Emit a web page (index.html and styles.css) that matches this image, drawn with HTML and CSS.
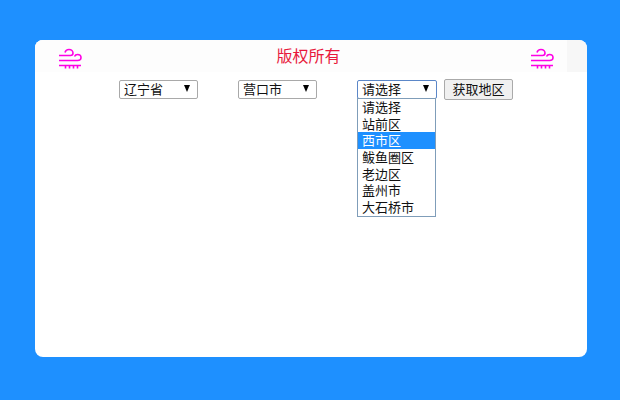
FILE: index.html
```html
<!DOCTYPE html>
<html lang="zh-CN">
<head>
    <meta charset="UTF-8">
    <title>版权所有</title>
    <link rel="stylesheet" href="styles.css">
</head>
<body>
<div class="card">
    <div class="header">
        <div class="header-main">
            <svg class="wind" viewBox="0 0 24 22" width="24" height="22">
                <path d="M1 8.500H12.500C14.500 8.500 15 7.500 15 6C15 4 13.500 2.500 11 2.500C9 2.500 7.500 3.500 7 5.500"/>
                <path d="M1 13.500H19.500C22 13.500 23 12 23 10.500C23 8.500 21.500 7.500 19.500 7.500C18 7.500 17 8.300 16.500 9.500"/>
                <path d="M1 18.500H23"/>
                <path d="M7.500 19V21.500M11.500 19V21.500M15.500 19V21.500M19.500 19V21.500"/>
            </svg>
            <h1 class="title">版权所有</h1>
            <svg class="wind" viewBox="0 0 24 22" width="24" height="22">
                <path d="M1 8.500H12.500C14.500 8.500 15 7.500 15 6C15 4 13.500 2.500 11 2.500C9 2.500 7.500 3.500 7 5.500"/>
                <path d="M1 13.500H19.500C22 13.500 23 12 23 10.500C23 8.500 21.500 7.500 19.500 7.500C18 7.500 17 8.300 16.500 9.500"/>
                <path d="M1 18.500H23"/>
                <path d="M7.500 19V21.500M11.500 19V21.500M15.500 19V21.500M19.500 19V21.500"/>
            </svg>
        </div>
    </div>
    <div class="filters">
        <div class="select">辽宁省<span class="arrow"></span></div>
        <div class="select">营口市<span class="arrow"></span></div>
        <div class="select-wrap">
            <div class="select select-open">请选择<span class="arrow"></span></div>
            <ul class="options">
                <li>请选择</li>
                <li>站前区</li>
                <li class="active">西市区</li>
                <li>鲅鱼圈区</li>
                <li>老边区</li>
                <li>盖州市</li>
                <li>大石桥市</li>
            </ul>
        </div>
        <button class="get-btn">获取地区</button>
    </div>
</div>
</body>
</html>
```

FILE: styles.css
```css
body {
    margin: 0;
    height: 400px;
    padding-top: 40px;
    box-sizing: border-box;
    background-color: #1e90ff;
    font-family: "Liberation Sans", "Noto Sans CJK SC", sans-serif;
    overflow: hidden;
}

.card {
    width: 552px;
    height: 317px;
    margin-left: 35px;
    background-color: #fff;
    border-radius: 8px;
    overflow: hidden;
}

.header {
    height: 32px;
    padding-right: 20px;
    background-color: #f7f7f7;
}

.header-main {
    display: flex;
    justify-content: space-between;
    align-items: center;
    height: 100%;
    padding: 0 13px 0 23px;
    background-color: #fdfdfd;
}

.wind {
    margin-top: 4px;
    fill: none;
    stroke: #ff00e6;
    stroke-width: 1.600;
}

.title {
    margin: 2px 0 0 5px;
    font-size: 16px;
    font-weight: normal;
    line-height: 32px;
    color: #e8193c;
}

.filters {
    display: flex;
    align-items: flex-start;
    gap: 40px;
    padding: 8px 0 0 84px;
}

.select {
    position: relative;
    width: 79px;
    height: 19px;
    box-sizing: border-box;
    padding-left: 4px;
    background-color: #fff;
    border: 1px solid #a9a9a9;
    border-radius: 2px;
    font-size: 13px;
    line-height: 17px;
    color: #111;
}

.arrow {
    position: absolute;
    top: 4px;
    right: 7px;
    border-left: 3.500px solid transparent;
    border-right: 3.500px solid transparent;
    border-top: 7px solid #000;
}

.select-wrap {
    position: relative;
    width: 80px;
}

.select-open {
    width: 80px;
    border-color: #5b87c8;
}

.options {
    position: absolute;
    top: 18px;
    left: 0;
    width: 79px;
    box-sizing: border-box;
    margin: 0;
    padding: 0;
    list-style: none;
    background-color: #fff;
    border: 1px solid #7f9db9;
}

.options li {
    height: 16.700px;
    padding-left: 4px;
    font-size: 13px;
    line-height: 17px;
    color: #111;
}

.options .active {
    background-color: #1e90ff;
    color: #fff;
}

.get-btn {
    width: 69px;
    height: 21px;
    margin: -1px 0 0 -33px;
    padding: 0;
    background-color: #f0f0f0;
    border: 1px solid #aaa;
    border-radius: 2px;
    font-family: inherit;
    font-size: 13px;
    line-height: 19px;
    color: #111;
}
```
